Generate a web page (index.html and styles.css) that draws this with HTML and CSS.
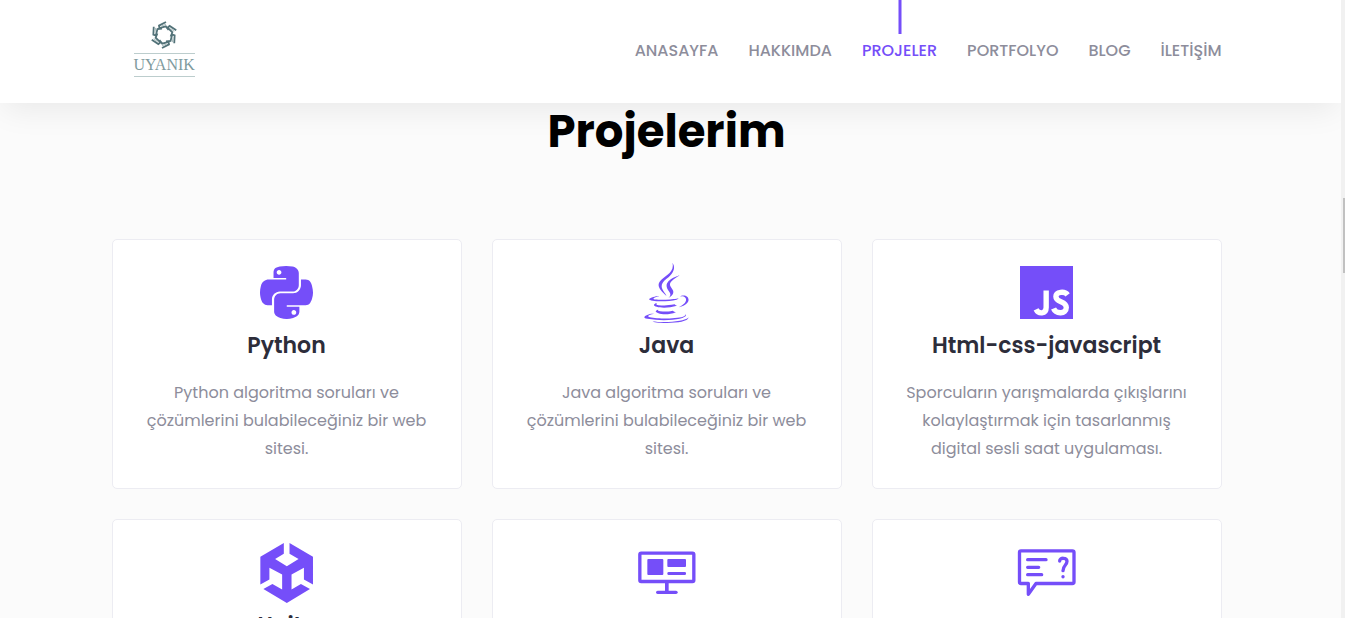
FILE: index.html
```html
<!DOCTYPE html>
<html lang="tr">
<head>
<meta charset="utf-8">
<meta name="viewport" content="width=device-width, initial-scale=1">
<title>Projelerim</title>
<link rel="stylesheet" href="styles.css">
</head>
<body>
<header class="header">
  <div class="container header-row">
    <a class="logo" href="#" aria-label="Uyanık">
      <svg class="logo-mark" viewBox="-14 -14 28 28" aria-hidden="true">
        <defs>
          <g id="arm">
            <path d="M2 -13L-5 -9.400L-4.600 -6.800L1.800 -8.600L4.600 -5" stroke="#527278" stroke-width="1.800"/>
            <path d="M-2.500 -9L2 -10.800" stroke="#a9bcbe" stroke-width="1"/>
          </g>
        </defs>
        <g fill="none">
          <use href="#arm"/>
          <use href="#arm" transform="rotate(60)"/>
          <use href="#arm" transform="rotate(120)"/>
          <use href="#arm" transform="rotate(180)"/>
          <use href="#arm" transform="rotate(240)"/>
          <use href="#arm" transform="rotate(300)"/>
        </g>
      </svg>
      <span class="logo-name">UYANIK</span>
    </a>
    <nav class="nav">
      <a href="#">ANASAYFA</a>
      <a href="#">HAKKIMDA</a>
      <a class="active" href="#">PROJELER</a>
      <a href="#">PORTFOLYO</a>
      <a href="#">BLOG</a>
      <a href="#">İLETİŞİM</a>
    </nav>
  </div>
</header>
<main class="container">
  <h1 class="title">Projelerim</h1>
  <div class="grid">
    <article class="card">
      <div class="icon"><svg width="53" height="53" viewBox="0 32 448 448" fill="currentColor" aria-hidden="true"><path d="M439.8 200.5c-7.7-30.9-22.3-54.2-53.4-54.2h-40.1v47.4c0 36.8-31.2 67.8-66.8 67.8H172.7c-29.2 0-53.4 25-53.4 54.3v101.8c0 29 25.2 46 53.4 54.3 33.8 9.9 66.3 11.7 106.8 0 26.9-7.8 53.4-23.5 53.4-54.3v-40.7H226.2v-13.6h160.2c31.1 0 42.6-21.7 53.4-54.2 11.2-33.5 10.7-65.7 0-108.6zM286.2 404c11.1 0 20.1 9.1 20.1 20.3 0 11.3-9 20.4-20.1 20.4-11 0-20.1-9.2-20.1-20.4.1-11.3 9.1-20.3 20.1-20.3zM167.8 248.1h106.8c29.7 0 53.4-24.5 53.4-54.3V91.9c0-29-24.4-50.7-53.4-55.6-35.8-5.9-74.7-5.6-106.8.1-45.2 8-53.4 24.7-53.4 55.6v40.7h106.9v13.6h-147c-31.1 0-58.3 18.7-66.8 54.2-9.8 40.7-10.2 66.1 0 108.6 7.6 31.6 25.7 54.2 56.8 54.2H101v-48.8c0-35.3 30.5-66.4 66.8-66.4zm-6.7-142.6c-11.1 0-20.1-9.1-20.1-20.3.1-11.3 9-20.4 20.1-20.4 11 0 20.1 9.2 20.1 20.4s-9 20.3-20.1 20.3z"/></svg></div>
      <h2>Python</h2>
      <p>Python algoritma soruları ve çözümlerini bulabileceğiniz bir web sitesi.</p>
    </article>
    <article class="card">
      <div class="icon"><svg width="45" height="60" viewBox="0 0 384 512" fill="currentColor" aria-hidden="true"><path d="M277.74 312.9c9.8-6.7 23.4-12.5 23.4-12.5s-38.7 7-77.2 10.2c-47.1 3.9-97.7 4.7-123.1 1.3-60.1-8 33-30.1 33-30.1s-36.1-2.4-80.6 19c-52.5 25.4 130 37 224.5 12.1zm-85.4-32.1c-19-42.7-83.1-80.2 0-145.8C296 53.2 242.84 0 242.84 0c21.5 84.5-75.6 110.1-110.7 162.6-23.9 35.9 11.7 74.4 60.2 118.2zm114.6-176.2c.1 0-175.2 43.8-91.5 140.2 24.7 28.4-6.5 54-6.5 54s62.7-32.4 33.9-72.9c-26.9-37.8-47.5-56.6 64.1-121.3zm-6.1 270.5a12.19 12.19 0 0 1-2 2.6c128.3-33.7 81.1-118.9 19.8-97.3a17.33 17.33 0 0 0-8.2 6.3 70.45 70.45 0 0 1 11-3c31-6.5 75.5 41.5-20.6 91.4zM348 437.4s14.5 11.9-15.9 21.2c-57.9 17.5-240.8 22.8-291.6.7-18.3-7.9 16-19 26.8-21.3 11.2-2.4 17.7-2 17.7-2-20.3-14.3-131.3 28.1-56.4 40.2C232.84 509.4 401 461.3 348 437.4zM124.44 396c-78.7 22 47.9 67.4 148.1 24.5a185.89 185.89 0 0 1-28.2-13.8c-44.7 8.5-65.4 9.1-106 4.5-33.5-3.8-13.9-15.2-13.9-15.2zm179.8 97.2c-78.7 14.8-175.8 13.1-233.3 3.6 0-.1 11.8 9.7 72.4 13.6 92.2 5.9 233.8-3.3 237.1-46.9 0 0-6.4 16.5-76.2 29.7zM260.64 353c-59.2 11.4-93.5 11.1-136.8 6.6-33.5-3.5-11.6-19.7-11.6-19.7-86.8 28.8 48.2 61.4 169.5 25.9a60.37 60.37 0 0 1-21.1-12.8z"/></svg></div>
      <h2>Java</h2>
      <p>Java algoritma soruları ve çözümlerini bulabileceğiniz bir web sitesi.</p>
    </article>
    <article class="card">
      <div class="icon"><svg width="53" height="53" viewBox="0 0 158 158" aria-hidden="true"><path fill="currentColor" d="M0 0h158v158H0z"/><g fill="none" stroke="#fff" stroke-width="16"><path d="M78 73V124C78 144 55 144 48 129"/><path d="M142 86C133 74 107 77 107 91C107 111 138 102 138 124C138 144 107 144 100 127"/></g></svg></div>
      <h2>Html-css-javascript</h2>
      <p>Sporcuların yarışmalarda çıkışlarını kolaylaştırmak için tasarlanmış digital sesli saat uygulaması.</p>
    </article>
    <article class="card">
      <div class="icon"><svg width="53" height="60" viewBox="60 38 158 179" fill="currentColor" aria-hidden="true"><path d="M131 38V70L105 86L140 107L175 86L148 70V38L218 79V162L191 147V112L154 132V177L182 160L209 175L140 217L70 175L97 160L126 177V132L88 112V147L61 162V79Z"/></svg></div>
      <h2>Unity</h2>
    </article>
    <article class="card">
      <div class="icon"><svg width="60" height="60" viewBox="50 39 180 180" fill="none" stroke="currentColor" stroke-width="10" stroke-linecap="round" aria-hidden="true"><rect x="58.500" y="69.500" width="162" height="85" rx="4"/><path d="M139.500 155V185" stroke-width="11" stroke-linecap="butt"/><path d="M112 187H167"/><g fill="currentColor" stroke="none"><rect x="81" y="87" width="48" height="48" rx="3"/><rect x="141" y="87" width="56" height="24" rx="3"/><rect x="141" y="126" width="56" height="9" rx="4"/></g></svg></div>
    </article>
    <article class="card">
      <div class="icon"><svg width="60" height="60" viewBox="50 39 180 180" fill="none" stroke="currentColor" stroke-width="10" stroke-linecap="round" stroke-linejoin="round" aria-hidden="true"><path d="M62 62.500H216Q221 62.500 221 67V156Q221 160.500 216 160.500H107L84 193V160.500H62Q57.500 160.500 57.500 156V67Q57.500 62.500 62 62.500Z"/><path d="M82 89H137M82 112H115M82 134H124"/><path d="M178 93C178 82 200 82 200 94C200 106 188 106 188 122"/><path d="M188 140V140.500"/></svg></div>
    </article>
  </div>
</main>
<div class="rail" aria-hidden="true"><div class="thumb"></div></div>
</body>
</html>
```
FILE: styles.css
```css
* { box-sizing: border-box; }
html { overflow: hidden; }
body {
  margin: 0;
  height: 100vh;
  overflow: hidden;
  padding-right: 12px;
  background: #fbfbfb;
  color: #8d8d9b;
  font-family: Poppins, Inter, "Noto Sans", sans-serif;
  font-size: 16px;
  line-height: 28px;
}
a { color: inherit; text-decoration: none; }
.container {
  max-width: 1140px;
  margin: 0 auto;
  padding: 0 15px;
}
.header {
  position: relative;
  z-index: 1;
  margin-right: -8px;
  padding-right: 8px;
  background: #fff;
  box-shadow: 0 10px 30px -4px rgba(0, 0, 0, 0.08);
}
.header-row {
  display: flex;
  justify-content: space-between;
  align-items: flex-start;
  min-height: 103px;
}
.logo {
  display: flex;
  flex-direction: column;
  align-items: center;
  gap: 4px;
  margin: 21px 0 0 22px;
}
.logo-mark { width: 28px; height: 28px; }
.logo-name {
  border-top: 1px solid #bccdcd;
  border-bottom: 1px solid #bccdcd;
  color: #7f9b9e;
  font-family: "Liberation Serif", serif;
  font-size: 16px;
  line-height: 22px;
}
.nav {
  display: flex;
  gap: 30px;
  font-weight: 500;
}
.nav a {
  position: relative;
  padding: 37px 0 38px;
}
.nav .active { color: #754ef9; }
.nav .active::before {
  content: "";
  position: absolute;
  top: 0;
  left: 50%;
  width: 3px;
  height: 34px;
  transform: translateX(-50%);
  background: #754ef9;
}
.title {
  margin: 0;
  padding-bottom: 78px;
  color: #000;
  font-size: 45px;
  font-weight: 700;
  line-height: 58px;
  text-align: center;
}
.grid {
  display: grid;
  grid-template-columns: repeat(3, 1fr);
  gap: 30px;
}
.card {
  min-height: 250px;
  padding: 23px 30px 25px;
  border: 1px solid #ececf2;
  border-radius: 5px;
  background: #fff;
  text-align: center;
}
.icon {
  display: flex;
  align-items: center;
  justify-content: center;
  height: 59px;
  color: #754ef9;
}
.card h2 {
  margin: 9px 0 18px;
  color: #2d2d3a;
  font-size: 22px;
  font-weight: 600;
  line-height: 30px;
}
.card p { margin: 0; }
.rail {
  position: fixed;
  z-index: 2;
  top: 0;
  right: 0;
  bottom: 0;
  width: 4px;
  padding: 198px 0 0 2px;
  background: #f1f1f1;
}
.thumb { height: 75px; background: #c1c1c1; }
```
